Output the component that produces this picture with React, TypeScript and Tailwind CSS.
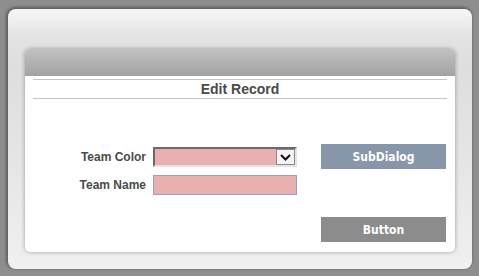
const LABEL = "text-right text-[12px] font-bold leading-[20px] text-[#4a4a4a]";
const BTN =
  "flex h-[25px] w-[125px] items-center justify-center text-[12px] font-bold text-white [font-family:'DejaVu_Sans_Condensed','Liberation_Sans',sans-serif]";

function ChevronDown() {
  return (
    <svg width="11" height="7" viewBox="0 0 11 7" fill="none">
      <path d="M1 1l4.5 4.5L10 1" stroke="#111" strokeWidth="2" />
    </svg>
  );
}

export default function App() {
  return (
    <div className="flex h-[276px] w-[479px] bg-[#8e8e8e] pb-[7px] pl-[8px] pr-[7px] pt-[9px] [font-family:'Liberation_Sans',Arial,sans-serif]">
      {/* Outer frame */}
      <div className="flex flex-1 flex-col rounded-[8px] bg-[linear-gradient(to_bottom,#f6f6f6_0px,#e2e2e2_30px,#dedede_60px,#e6e6e6_160px,#f0f0f0_100%)] px-[17px] pb-[17px] pt-[40px] shadow-[-1px_-1px_3px_1px_#5e5e5e]">
        {/* Dialog */}
        <div className="flex flex-1 flex-col overflow-hidden rounded-[5px] bg-white shadow-[0_0_4px_rgba(0,0,0,0.35)]">
          <div className="h-[27px] bg-[linear-gradient(to_bottom,#c2c2c2,#a2a2a2)]" />
          <div className="mx-[8px] mt-[3px] border-y border-[#c4c4c4] text-center text-[14px] font-bold leading-[18px] text-[#4a4a4a]">
            Edit Record
          </div>

          <div className="flex items-start pl-[8px]">
            {/* Form */}
            <div className="mt-[48px] grid grid-cols-[113px_144px] gap-x-[7px] gap-y-[8px]">
              <span className={LABEL}>Team Color</span>
              <div className="flex h-[20px] border-[2px] border-b-[#e4e4e4] border-l-[#6b6b6b] border-r-[#e4e4e4] border-t-[#6b6b6b] bg-[#e8b0ae]">
                <div className="flex-1" />
                <div className="flex w-[19px] items-center justify-center border border-[#8a8a8a] bg-[#f4f4f4]">
                  <ChevronDown />
                </div>
              </div>
              <span className={LABEL}>Team Name</span>
              <div className="h-[20px] border border-[#8ea4bb] bg-[#e8b0ae]" />
            </div>

            {/* Actions */}
            <div className="ml-[24px] mt-[45px] flex flex-col gap-[48px]">
              <button className={`${BTN} bg-[#8796a8]`}>SubDialog</button>
              <button className={`${BTN} bg-[#8c8c8c]`}>Button</button>
            </div>
          </div>
        </div>
      </div>
    </div>
  );
}
